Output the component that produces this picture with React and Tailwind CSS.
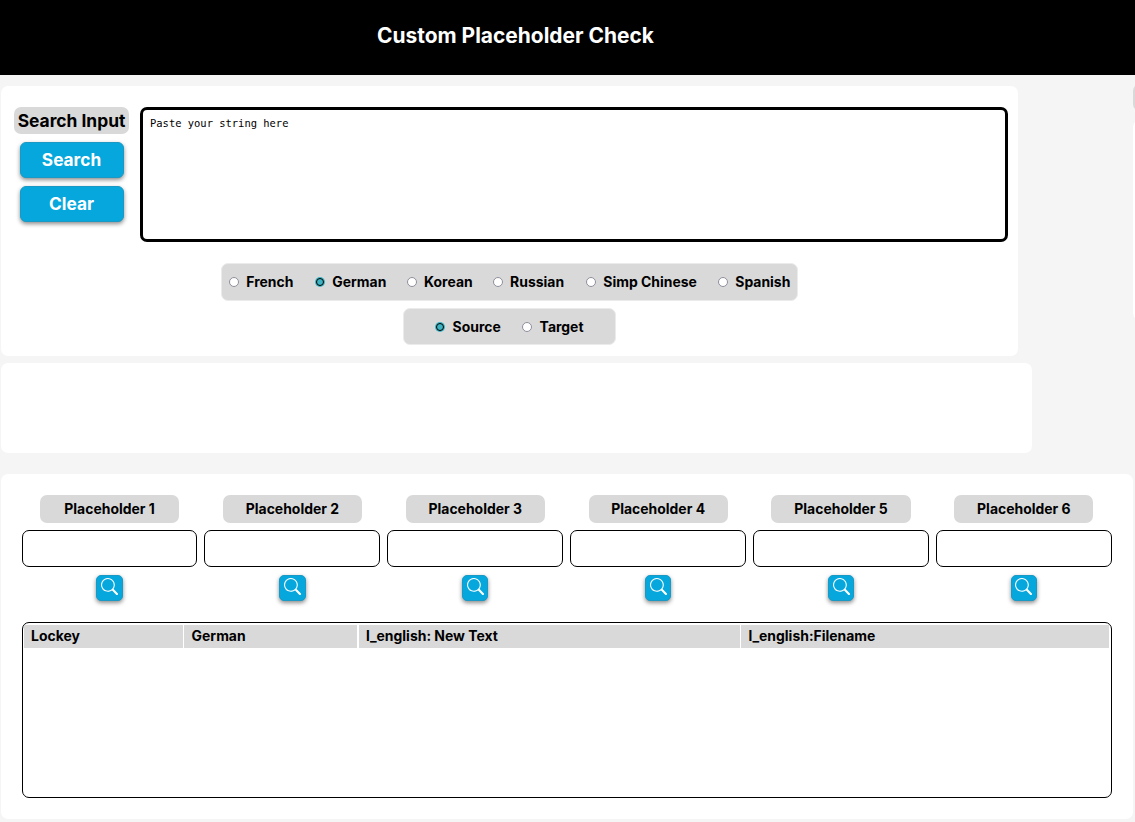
import { BsSearch } from "react-icons/bs";

const languages = ["French", "German", "Korean", "Russian", "Simp Chinese", "Spanish"];
const languageWidths = ["w-[86px]", "w-[91.8px]", "w-[86px]", "w-[93.2px]", "w-[132px]", "w-[70px]"];

const Radio = ({ label, checked, width }) => (
  <label className={`flex shrink-0 items-center whitespace-nowrap ${width}`}>
    <span className="mr-[7.3px] flex size-[10px] shrink-0 items-center justify-center">
      <span
        className={
          checked
            ? "block size-[8px] rounded-full border border-black bg-[#3db4c4] shadow-[0_0_0_1px_#3db4c4]"
            : "block size-[10px] rounded-full border border-[#8f8f9d] bg-white"
        }
      />
    </span>
    {label}
  </label>
);

const buttonShadow = "shadow-[0_2px_4px_rgba(0,0,0,0.45)]";

const ActionButton = ({ children }) => (
  <button
    className={`h-9 w-[104px] rounded-[6px] border border-[#1999c4] bg-[#05a7dd] text-[17.3px] leading-none font-bold text-white ${buttonShadow}`}
  >
    {children}
  </button>
);

const PlaceholderField = ({ index }) => (
  <div className="flex flex-col items-center">
    <div className="flex h-7 w-[139.2px] items-center justify-center rounded-[7px] bg-[#d9d9d9]">Placeholder {index}</div>
    <input className="mt-[7px] h-[37px] w-full rounded-[7px] border border-black bg-white" />
    <button
      aria-label={`Search placeholder ${index}`}
      className={`mt-2 flex h-[26px] w-[26.2px] items-start justify-center rounded-[5px] border border-[#1999c4] bg-[#05a7dd] pt-[2px] text-white ${buttonShadow}`}
    >
      <BsSearch size={17} />
    </button>
  </div>
);

const columns = [
  { title: "Lockey", spacing: "pl-[7.3px]" },
  { title: "German", spacing: "pl-[7.6px]" },
  { title: "l_english: New Text", spacing: "ml-px pl-[6.9px]" },
  { title: "l_english:Filename", spacing: "pl-[7.1px]" },
];

export default function App() {
  return (
    <div className="h-[822px] w-[1135px] overflow-hidden bg-[#f5f5f5] font-['Inter',sans-serif] text-[13.95px] leading-none font-bold text-black">
      <header className="flex h-[75px] items-center bg-black pb-[3px] pl-[377px] text-[20.95px] text-white">
        <h1>Custom Placeholder Check</h1>
      </header>

      <div className="flex h-[288px] justify-between pl-px">
        <section className="mt-[11px] h-[270px] w-[1017px] rounded-[7px] bg-white pt-[21px]">
          <div className="flex pl-[13px]">
            <div className="flex w-[115px] flex-col items-center gap-2">
              <div className="flex h-[27px] w-full items-center justify-center rounded-[7px] bg-[#d9d9d9] text-[17.4px] whitespace-nowrap">
                Search Input
              </div>
              <ActionButton>Search</ActionButton>
              <ActionButton>Clear</ActionButton>
            </div>
            <textarea
              placeholder="Paste your string here"
              className="ml-[11px] block h-[135px] w-[868px] resize-none rounded-[7px] border-[3px] border-black px-[7px] py-[7px] font-['DejaVu_Sans_Mono',monospace] text-[10.46px] leading-[13px] font-normal placeholder:text-black"
            />
          </div>
          <div className="mt-[21px] ml-[220px] flex h-[38px] w-[577px] items-center rounded-[7px] border border-[#ebebeb] bg-[#d9d9d9] pl-[7px]">
            {languages.map((name, i) => (
              <Radio key={name} label={name} checked={name === "German"} width={languageWidths[i]} />
            ))}
          </div>
          <div className="mt-[7px] ml-[402px] flex h-[37px] w-[213px] items-center rounded-[7px] border border-[#ebebeb] bg-[#d9d9d9] pt-px pl-[31.3px]">
            <Radio label="Source" checked width="w-[87px]" />
            <Radio label="Target" width="w-[62px]" />
          </div>
        </section>

        <aside className="w-[2px] overflow-hidden pt-[9px]">
          <div className="h-[27px] w-[115px] rounded-[7px] bg-[#d9d9d9]" />
          <div className="mt-[9px] h-[200px] w-[200px] rounded-[7px] bg-white" />
        </aside>
      </div>

      <section className="ml-px h-[90px] w-[1031px] rounded-[7px] bg-white" />

      <section className="mt-[21px] ml-px h-[345px] w-[1132px] rounded-[7px] bg-white pt-[21px] pr-[21.2px] pl-[20.63px]">
        <div className="grid grid-cols-6 gap-[7px]">
          {[1, 2, 3, 4, 5, 6].map((index) => (
            <PlaceholderField key={index} index={index} />
          ))}
        </div>
        <div className="mt-[21px] h-[176px] rounded-[7px] border border-black px-[1.2px] pt-[2px]">
          <div className="grid h-[23px] grid-cols-[159.2px_173px_382.3px_1fr] gap-px pr-px">
            {columns.map(({ title, spacing }) => (
              <div key={title} className={`flex items-center bg-[#d9d9d9] pb-[2px] ${spacing}`}>
                {title}
              </div>
            ))}
          </div>
        </div>
      </section>
    </div>
  );
}
